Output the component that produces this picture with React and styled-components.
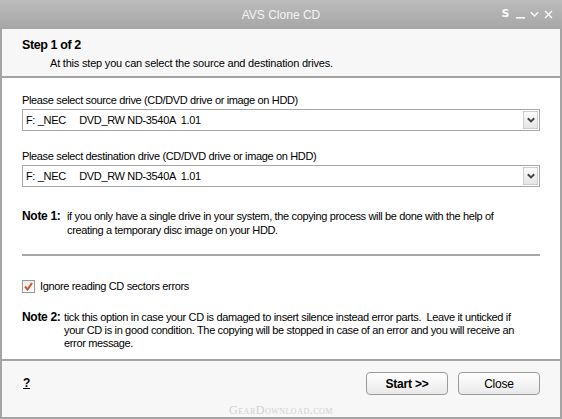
import styled, { createGlobalStyle } from "styled-components";

const GlobalStyle = createGlobalStyle`
  html, body {
    margin: 0;
    padding: 0;
    background: #ffffff;
  }
  body {
    font-family: "Liberation Sans", Arial, sans-serif;
    font-size: 11px;
    letter-spacing: -0.35px;
    color: #000;
  }
`;

const Window = styled.div`
  position: relative;
  width: 562px;
  height: 419px;
  display: flex;
  flex-direction: column;
  overflow: hidden;
`;

const TitleBar = styled.div`
  height: 29px;
  flex: none;
  display: flex;
  align-items: center;
  justify-content: center;
  position: relative;
  background: linear-gradient(#bcbcbc, #a6a6a6);
`;

const Title = styled.span`
  color: #f4f4f4;
  font-size: 12px;
  letter-spacing: 0;
`;

const Controls = styled.div`
  position: absolute;
  right: 9px;
  top: 7px;
  display: flex;
  align-items: center;
  gap: 5px;
  color: #fafafa;
`;

const SButton = styled.span`
  font-family: "DejaVu Sans", sans-serif;
  font-weight: bold;
  font-size: 11px;
  line-height: 14px;
  margin-right: 2px;
`;

const Frame = styled.div`
  flex: 1;
  display: flex;
  flex-direction: column;
  border: 2px solid #a4a4a4;
  border-top: none;
`;

const Header = styled.div`
  flex: none;
  background: #f7f7f7;
  border-bottom: 2px solid #a4a4a4;
  padding: 8px 20px 0;
  box-sizing: border-box;
  height: 49px;
`;

const StepTitle = styled.div`
  font-weight: bold;
  font-size: 12.5px;
  letter-spacing: -0.4px;
  line-height: 16px;
`;

const StepText = styled.div`
  padding-left: 28px;
  margin-top: 3px;
  line-height: 14px;
  letter-spacing: -0.2px;
`;

const Body = styled.div`
  flex: 1;
  background: #ffffff;
  padding: 15px 20px 0;
  display: flex;
  flex-direction: column;
`;

const Label = styled.div`
  line-height: 14px;
  margin-top: ${(p) => p.$top || 0}px;
`;

const Combo = styled.div`
  margin-top: 2px;
  height: 22px;
  box-sizing: border-box;
  border: 1px solid #a7a7a7;
  display: flex;
  align-items: stretch;
  background: #fff;
`;

const ComboText = styled.div`
  flex: 1;
  padding-left: 3px;
  line-height: 20px;
  white-space: pre;
`;

const ComboButton = styled.div`
  width: 15px;
  margin: 1px;
  box-sizing: border-box;
  border: 1px solid #cfcfcf;
  background: linear-gradient(#fbfbfb, #e6e6e6);
  display: flex;
  align-items: center;
  justify-content: center;
`;

const Note = styled.div`
  display: flex;
  margin-top: ${(p) => p.$top}px;
  line-height: ${(p) => p.$lh}px;
`;

const NoteLabel = styled.span`
  font-weight: bold;
  font-size: 12px;
  letter-spacing: -0.3px;
  white-space: pre;
  flex: none;
  width: ${(p) => p.$w}px;
`;

const NoteText = styled.span`
  flex: 1;
  padding-right: 14px;
`;

const Divider = styled.div`
  margin-top: 17px;
  height: 2px;
  background: #a8a8a8;
`;

const CheckRow = styled.label`
  margin-top: 22px;
  display: flex;
  align-items: center;
  gap: 5px;
  height: 16px;
`;

const CheckBox = styled.span`
  width: 13px;
  height: 13px;
  box-sizing: border-box;
  border: 1px solid #9a9a9a;
  background: linear-gradient(#ececec, #ffffff);
  display: flex;
  align-items: center;
  justify-content: center;
`;

const Footer = styled.div`
  height: 45px;
  flex: none;
  background: #f7f7f7;
  border-top: 2px solid #a4a4a4;
  display: flex;
  align-items: flex-start;
  padding: 11px 0 0 21px;
  gap: 10px;
`;

const Help = styled.span`
  font-weight: bold;
  font-size: 12px;
  text-decoration: underline;
  line-height: 23px;
  margin-right: auto;
`;

const Button = styled.button`
  width: 82px;
  height: 23px;
  border: 1px solid #9a9a9a;
  border-radius: 4px;
  background: linear-gradient(#ffffff, #e9e9e9);
  font-family: "Liberation Sans", Arial, sans-serif;
  font-size: 12px;
  letter-spacing: -0.2px;
  font-weight: ${(p) => (p.$primary ? "bold" : "normal")};
  color: #000;
  padding: 0;
  &:last-child {
    margin-right: 20px;
  }
`;

const Watermark = styled.div`
  position: absolute;
  left: 0;
  right: 0;
  bottom: 1px;
  text-align: center;
  font-family: "Liberation Serif", serif;
  font-variant: small-caps;
  font-size: 12px;
  letter-spacing: 0.5px;
  color: #d0d0d0;
  pointer-events: none;
`;

const Chevron = ({ size = 8, color = "#444", w = 1.6 }) => (
  <svg width={size} height={size * 0.7} viewBox="0 0 10 7">
    <path d="M1 1.5 L5 5.5 L9 1.5" fill="none" stroke={color} strokeWidth={w * 1.5} />
  </svg>
);

const DRIVE = "F: _NEC     DVD_RW ND-3540A  1.01";

export default function App() {
  return (
    <>
      <GlobalStyle />
      <Window>
        <TitleBar>
          <Title>AVS Clone CD</Title>
          <Controls>
            <SButton>S</SButton>
            <svg width="9" height="12" viewBox="0 0 9 12">
              <rect x="0" y="9" width="9" height="1.6" fill="#fafafa" />
            </svg>
            <Chevron size={9} color="#fafafa" w={1.1} />
            <svg width="9" height="9" viewBox="0 0 9 9">
              <path d="M1 1 L8 8 M8 1 L1 8" stroke="#fafafa" strokeWidth="1.4" />
            </svg>
          </Controls>
        </TitleBar>
        <Frame>
          <Header>
            <StepTitle>Step 1 of 2</StepTitle>
            <StepText>At this step you can select the source and destination drives.</StepText>
          </Header>
          <Body>
            <Label>Please select source drive (CD/DVD drive or image on HDD)</Label>
            <Combo>
              <ComboText>{DRIVE}</ComboText>
              <ComboButton>
                <Chevron />
              </ComboButton>
            </Combo>
            <Label $top={18}>Please select destination drive (CD/DVD drive or image on HDD)</Label>
            <Combo>
              <ComboText>{DRIVE}</ComboText>
              <ComboButton>
                <Chevron />
              </ComboButton>
            </Combo>
            <Note $top={22} $lh={14}>
              <NoteLabel $w={45}>Note 1: </NoteLabel>
              <NoteText>
                if you only have a single drive in your system, the copying process will be done with the help of
                creating a temporary disc image on your HDD.
              </NoteText>
            </Note>
            <Divider />
            <CheckRow>
              <CheckBox>
                <svg width="9" height="9" viewBox="0 0 9 9">
                  <path d="M1 4.5 L3.5 7.5 L8 1" fill="none" stroke="#d0542a" strokeWidth="2" />
                </svg>
              </CheckBox>
              Ignore reading CD sectors errors
            </CheckRow>
            <Note $top={17} $lh={13}>
              <NoteLabel $w={42}>Note 2: </NoteLabel>
              <NoteText>
                tick this option in case your CD is damaged to insert silence instead error parts.&nbsp; Leave it unticked if
                your CD is in good condition. The copying will be stopped in case of an error and you will receive an
                error message.
              </NoteText>
            </Note>
          </Body>
          <Footer>
            <Help>?</Help>
            <Button $primary>Start &gt;&gt;</Button>
            <Button>Close</Button>
          </Footer>
        </Frame>
        <Watermark>GearDownload.com</Watermark>
      </Window>
    </>
  );
}
